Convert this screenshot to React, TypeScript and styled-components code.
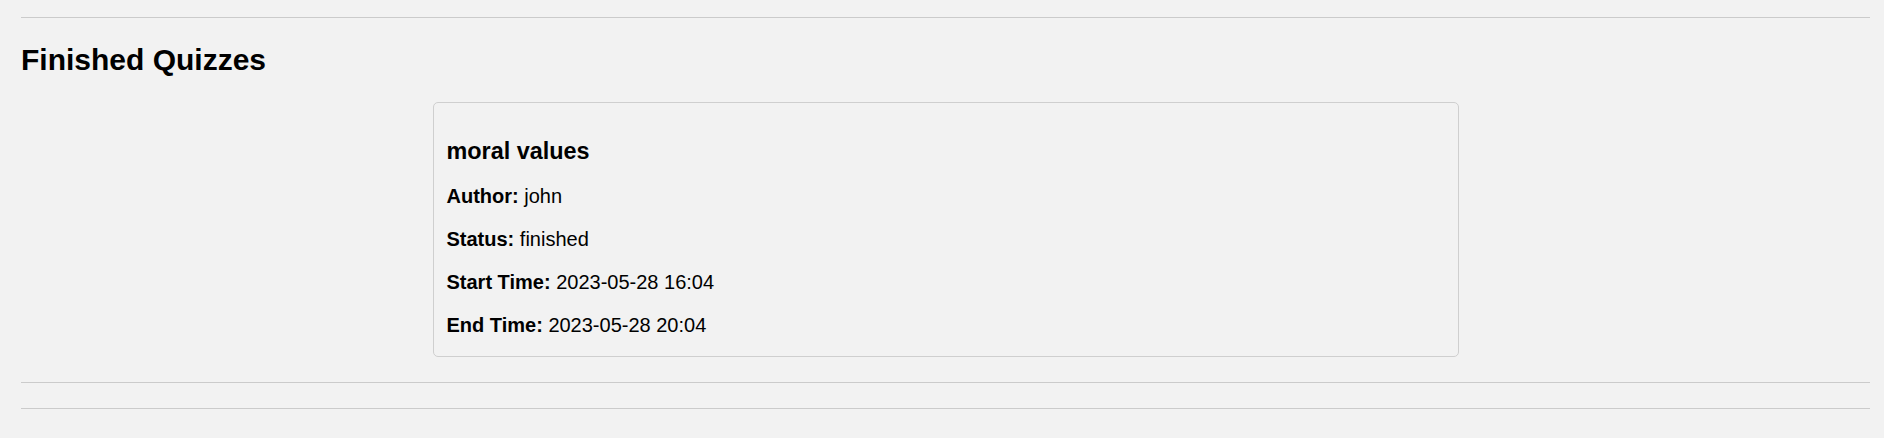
import React from 'react';
import styled, { createGlobalStyle } from 'styled-components';

const GlobalStyle = createGlobalStyle`
  html, body {
    margin: 0;
    padding: 0;
    background: #f2f2f2;
  }
  body {
    font-family: "Liberation Sans", Arial, sans-serif;
    color: #000;
  }
`;

interface Quiz {
    id: number;
    title: string;
    author: string;
    status: string;
    startTime: string;
    endTime: string;
}

const finishedQuizzes: Quiz[] = [
    {
        id: 1,
        title: 'moral values',
        author: 'john',
        status: 'finished',
        startTime: '2023-05-28 16:04',
        endTime: '2023-05-28 20:04',
    },
];

export default function App() {
    return (
        <>
            <GlobalStyle />
            <Page>
                <Divider />
                <SectionTitle>Finished Quizzes</SectionTitle>
                <QuizList>
                    {finishedQuizzes.map((quiz) => (
                        <QuizCard key={quiz.id}>
                            <QuizTitle>{quiz.title}</QuizTitle>
                            <Field>
                                <Label>Author:</Label> {quiz.author}
                            </Field>
                            <Field>
                                <Label>Status:</Label> {quiz.status}
                            </Field>
                            <Field>
                                <Label>Start Time:</Label> {quiz.startTime}
                            </Field>
                            <Field>
                                <Label>End Time:</Label> {quiz.endTime}
                            </Field>
                        </QuizCard>
                    ))}
                </QuizList>
                <Divider $gap={25} />
                <Divider $gap={25} />
            </Page>
        </>
    );
}

// Styled Components
const Page = styled.div`
  padding: 0 14px 30px 21px;
`;

const Divider = styled.hr<{ $gap?: number }>`
  height: 0;
  margin: 0;
  margin-top: ${(p) => (p.$gap ?? 17)}px;
  border: none;
  border-top: 1px solid #cbcbcb;
`;

const SectionTitle = styled.h2`
  margin: 25px 0 0;
  font-size: 30px;
  line-height: 34px;
  font-weight: 700;
`;

const QuizList = styled.div`
  display: flex;
  flex-direction: column;
  align-items: center;
  margin-top: 25px;
`;

const QuizCard = styled.div`
  box-sizing: border-box;
  width: 1026px;
  max-width: 100%;
  padding: 12px 13px 19px;
  border: 1px solid #cfcfcf;
  border-radius: 5px;
`;

const QuizTitle = styled.h3`
  margin: 22px 0 0;
  font-size: 23.4px;
  line-height: 28px;
  font-weight: 700;
`;

const Field = styled.p`
  margin: 20px 0 0;
  font-size: 20px;
  line-height: 23px;
`;

const Label = styled.strong`
  font-weight: 700;
`;
